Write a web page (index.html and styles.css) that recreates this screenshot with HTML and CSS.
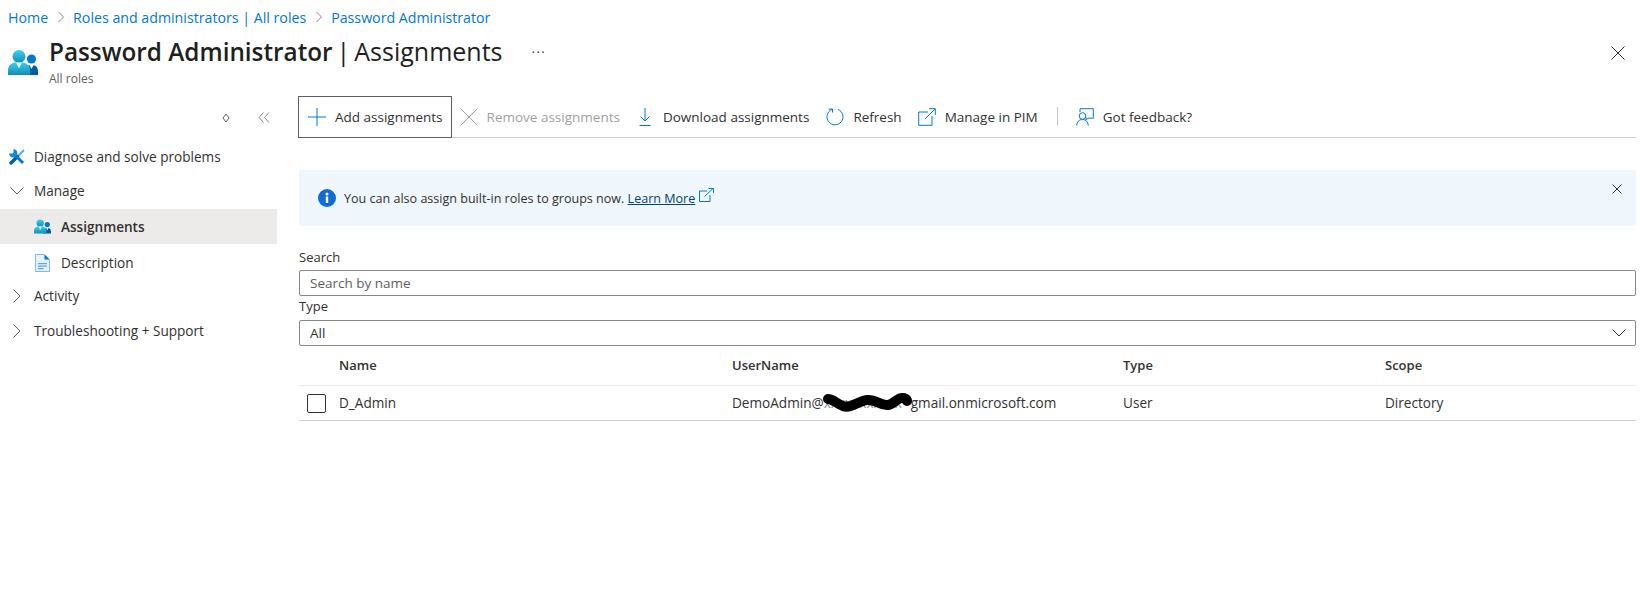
FILE: index.html
```html
<!DOCTYPE html>
<html lang="en">
<head>
    <meta charset="UTF-8">
    <title>Password Administrator | Assignments</title>
    <link rel="stylesheet" href="styles.css">
</head>
<body>
    <svg class="defs" width="0" height="0">
        <defs>
            <linearGradient id="cyan" x1="0" y1="0" x2="0" y2="1">
                <stop offset="0" stop-color="#32d4f5"/>
                <stop offset="1" stop-color="#198ab3"/>
            </linearGradient>
            <symbol id="users" viewBox="0 0 30 25">
                <circle cx="23.500" cy="9" r="4.600" fill="#0078d4"/>
                <path d="M16 25c0-6 1.500-10 7.500-10s6.500 4 6.500 7.500V25z" fill="#005ba1"/>
                <path d="M21.500 15l2 4 2-4z" fill="#fff"/>
                <circle cx="11" cy="6.500" r="6.500" fill="url(#cyan)"/>
                <path d="M0 25v-5c0-5 4-8 11-8s11 3 11 8v5z" fill="url(#cyan)"/>
                <path d="M8 12.500l3 6 3-6z" fill="#fff" opacity=".85"/>
            </symbol>
        </defs>
    </svg>

    <nav class="breadcrumb">
        <a>Home</a>
        <svg class="crumb-sep" viewBox="0 0 8 12"><path d="M1.500 1l5 5-5 5"/></svg>
        <a>Roles and administrators | All roles</a>
        <svg class="crumb-sep" viewBox="0 0 8 12"><path d="M1.500 1l5 5-5 5"/></svg>
        <a>Password Administrator</a>
    </nav>

    <header class="blade-header">
        <svg class="blade-icon"><use href="#users"/></svg>
        <div class="blade-title">
            <h1><strong>Password Administrator</strong> | Assignments</h1>
            <div class="blade-sub">All roles</div>
        </div>
        <span class="more">···</span>
        <svg class="blade-close" viewBox="0 0 14 14"><path d="M.5.500l13 13M13.500.500l-13 13"/></svg>
    </header>

    <div class="blade-body">
        <aside class="sidebar">
            <div class="side-tools">
                <svg class="tool-diamond" viewBox="0 0 8 10"><path d="M4 1L7 5 4 9 1 5z"/></svg>
                <svg class="tool-collapse" viewBox="0 0 12 11"><path d="M5.500.500L1 5.500l4.500 5M11 .500L6.500 5.500l4.500 5"/></svg>
            </div>
            <ul class="nav">
                <li class="nav-row">
                    <svg class="nav-tools" viewBox="0 0 16 16">
                        <path d="M15 1L8 8" stroke="#50a8e0" stroke-width="1.800"/>
                        <path d="M8.500 7.500L2 14" stroke="#005ba1" stroke-width="3.400" stroke-linecap="round"/>
                        <path d="M5 5l9 9" stroke="#0078d4" stroke-width="3"/>
                        <circle cx="4.200" cy="4.200" r="4.200" fill="#0f8ad8"/>
                        <path d="M0 0h4.500v3.600L3.600 4.500H0z" fill="#fff"/>
                    </svg>
                    <span class="nav-label">Diagnose and solve problems</span>
                </li>
                <li class="nav-row nav-up">
                    <svg class="chev-down" viewBox="0 0 14 8"><path d="M.5.500L7 7 13.500.500"/></svg>
                    <span class="nav-label">Manage</span>
                </li>
                <li class="nav-row nav-child selected">
                    <svg class="nav-icon"><use href="#users"/></svg>
                    <span class="nav-label">Assignments</span>
                </li>
                <li class="nav-row nav-child nav-down">
                    <svg class="nav-doc" viewBox="0 0 15 18">
                        <path d="M.5.500h9l5 5v12H.5z" fill="#e6f2fb" stroke="#83b9f9"/>
                        <path d="M9.500.500l5 5h-5z" fill="#0078d4"/>
                        <path d="M3 9h9v1.300H3zM3 11.500h9v1.300H3zM3 14h5.500v1.300H3z" fill="#5ea0ef"/>
                    </svg>
                    <span class="nav-label">Description</span>
                </li>
                <li class="nav-row nav-up">
                    <svg class="chev-right" viewBox="0 0 8 14"><path d="M.5.500L7 7 .5 13.500"/></svg>
                    <span class="nav-label">Activity</span>
                </li>
                <li class="nav-row nav-up">
                    <svg class="chev-right" viewBox="0 0 8 14"><path d="M.5.500L7 7 .5 13.500"/></svg>
                    <span class="nav-label">Troubleshooting + Support</span>
                </li>
            </ul>
        </aside>

        <main class="content">
            <div class="toolbar">
                <button class="tool focused">
                    <svg class="icon-plus" viewBox="0 0 18 18"><path d="M9 0v18M0 9h18"/></svg>
                    Add assignments
                </button>
                <button class="tool disabled">
                    <svg class="icon-x" viewBox="0 0 18 18"><path d="M.5.500l17 17M17.500.500l-17 17"/></svg>
                    Remove assignments
                </button>
                <button class="tool tool-download">
                    <svg class="icon-download" viewBox="0 0 12 18"><path d="M6 0v13M1.500 8.500L6 13l4.500-4.500M.5 17.500h11"/></svg>
                    Download assignments
                </button>
                <button class="tool tool-refresh">
                    <svg class="icon-refresh" viewBox="0 0 18 18"><path d="M6 1.400a8 8 0 1 0 6 0M6.500 1v3.500M2.500 1.200L6.500 1"/></svg>
                    Refresh
                </button>
                <button class="tool tool-pim">
                    <svg class="icon-open" viewBox="0 0 18 18"><path d="M10 4H.7v13.300H14V8M7 11L17 1M11 .7h6.300V7"/></svg>
                    Manage in PIM
                </button>
                <span class="tool-sep"></span>
                <button class="tool">
                    <svg class="icon-feedback" viewBox="0 0 18 18"><path d="M4 4V.7h13.300v9.500h-5.500l-1.800 2v-3"/><circle cx="6.500" cy="8" r="3.300"/><path d="M.7 17.500c0-3.500 2.500-6 5.800-6s5.500 2.500 5.800 6"/></svg>
                    Got feedback?
                </button>
            </div>

            <div class="banner">
                <svg class="banner-info" viewBox="0 0 18 18"><circle cx="9" cy="9" r="9" fill="#0f6cd6"/><rect x="7.800" y="7.500" width="2.400" height="6.500" fill="#fff"/><circle cx="9" cy="5" r="1.500" fill="#fff"/></svg>
                <span class="banner-text">You can also assign built-in roles to groups now. <a>Learn More</a></span>
                <svg class="banner-link" viewBox="0 0 15 14"><path d="M8 3H.5v10.500H11V7M5.500 8.500L14 .5M9.500.500H14.500V5"/></svg>
                <svg class="banner-close" viewBox="0 0 10 10"><path d="M.5.500l9 9M9.500.500l-9 9"/></svg>
            </div>

            <label class="field-label">Search</label>
            <div class="field placeholder">Search by name</div>
            <label class="field-label type-label">Type</label>
            <div class="field">
                All
                <svg class="select-chev" viewBox="0 0 14 8"><path d="M.5.500L7 7 13.500.500"/></svg>
            </div>

            <div class="grid grid-head">
                <span></span>
                <span>Name</span>
                <span>UserName</span>
                <span>Type</span>
                <span>Scope</span>
            </div>
            <div class="grid grid-row">
                <span class="checkbox"></span>
                <span>D_Admin</span>
                <span>DemoAdmin@<span class="redacted">xxxxxxxxxxx<svg class="scribble" viewBox="0 0 90 20"><path d="M6 6c5 0 9 5 15 7 8 3 15-5 24-6 9-1 13 6 21 5 6-1 9-7 14-7 3 0 5 1 5 3"/></svg></span>gmail.onmicrosoft.com</span>
                <span>User</span>
                <span>Directory</span>
            </div>
        </main>
    </div>
</body>
</html>
```

FILE: styles.css
```css
:root {
    --text: #323130;
    --link: #0078d4;
    --icon: #0078d4;
    --ui-font: "Open Sans", "Noto Sans", Arial, sans-serif;
}

* {
    box-sizing: border-box;
}

body {
    margin: 0;
    height: 608px;
    overflow: hidden;
    background: white;
    font-family: var(--ui-font);
    font-size: 13.500px;
    color: var(--text);
}

svg {
    fill: none;
    flex: none;
}

.defs {
    display: block;
    height: 0;
}

/* top of the blade */
.breadcrumb {
    display: flex;
    align-items: center;
    height: 34px;
    padding-left: 8px;
    font-size: 14.200px;
    color: var(--link);
}

.crumb-sep {
    width: 8px;
    height: 12px;
    margin: 0 8px 0 9px;
    stroke: #8a8886;
}

.blade-header {
    display: flex;
    align-items: flex-start;
    height: 62px;
    padding-right: 15px;
}

.blade-icon {
    width: 30px;
    height: 25px;
    margin: 16px 0 0 8px;
}

.blade-title {
    margin-left: 11px;
}

.blade-title h1 {
    margin: -1px 0 0;
    font-size: 25px;
    font-weight: 400;
    line-height: 36px;
    word-spacing: -2.500px;
    color: #201f1e;
}

.blade-title strong {
    font-size: 24.300px;
    font-weight: 600;
    word-spacing: 0;
}

.blade-sub {
    margin-top: 1px;
    font-size: 12px;
    line-height: 16px;
    color: #605e5c;
}

.more {
    margin: 8px 0 0 29px;
    font-size: 13px;
    line-height: 20px;
    letter-spacing: 1.500px;
}

.blade-close {
    width: 14px;
    height: 14px;
    margin: 12px 0 0 auto;
    stroke: #323130;
}

.blade-body {
    display: flex;
}

/* left menu */
.sidebar {
    width: 277px;
    flex: none;
}

.side-tools {
    display: flex;
    align-items: center;
    height: 43px;
    padding: 0 9px 0 222px;
    gap: 28px;
}

.tool-diamond {
    width: 8px;
    height: 10px;
    stroke: #605e5c;
}

.tool-collapse {
    width: 12px;
    height: 11px;
    stroke: #8a8886;
}

.nav {
    list-style: none;
    margin: 0;
    padding: 0;
}

.nav-row {
    display: flex;
    align-items: center;
    height: 35px;
    padding-left: 9px;
    font-size: 13.600px;
}

.nav-row.selected {
    background: #edebe9;
}

.nav-up {
    padding-bottom: 2px;
}

.nav-down {
    padding-top: 2px;
}

.nav-child {
    padding-left: 34px;
}

.nav-label {
    margin-left: 10px;
}

.selected .nav-label {
    font-weight: 600;
}

.nav-tools {
    width: 16px;
    height: 16px;
}

.nav-tools + .nav-label {
    margin-left: 9px;
}

.nav-icon {
    width: 17px;
    height: 15px;
}

.nav-doc {
    width: 15px;
    height: 18px;
    margin: 0 1px;
}

.chev-down {
    width: 14px;
    height: 8px;
    margin-left: 1px;
    stroke: #605e5c;
}

.chev-right {
    width: 8px;
    height: 14px;
    margin: 0 3px 0 4px;
    stroke: #605e5c;
}

/* right side */
.content {
    flex: 1;
    min-width: 0;
    padding: 0 4px 0 21px;
}

.toolbar {
    display: flex;
    align-items: center;
    height: 42px;
    border-bottom: 1px solid #d2d0ce;
}

.tool {
    display: flex;
    align-items: center;
    height: 42px;
    padding: 0 9px;
    background: none;
    border: 0;
    font: inherit;
    color: var(--text);
}

.tool svg {
    margin-right: 9px;
    stroke: var(--icon);
}

.tool.focused {
    padding: 0 8px 0 9px;
    border: 1px solid #605e5c;
}

.tool.disabled {
    padding-left: 8px;
    color: #a19f9d;
}

.tool.disabled svg {
    stroke: #a19f9d;
}

.tool-download {
    padding: 0 8px 0 10px;
}

.tool-download svg {
    margin-right: 12px;
}

.tool-refresh {
    padding-right: 7px;
}

.tool-pim {
    padding-right: 10px;
}

.icon-plus,
.icon-x,
.icon-refresh,
.icon-open,
.icon-feedback {
    width: 18px;
    height: 18px;
}

.icon-download {
    width: 12px;
    height: 18px;
}

.tool-sep {
    width: 1px;
    height: 19px;
    margin: 0 9px;
    background: #c8c6c4;
}

.banner {
    display: flex;
    align-items: center;
    height: 56px;
    margin: 32px 0 0 1px;
    padding: 0 14px 0 19px;
    background: #eff6fc;
    border-radius: 2px;
    font-size: 12.550px;
}

.banner-info {
    width: 18px;
    height: 18px;
    margin-right: 8px;
}

.banner-text a {
    color: #004578;
    text-decoration: underline;
}

.banner-link {
    width: 15px;
    height: 14px;
    margin: -6px 0 0 4px;
    stroke: #0078d4;
}

.banner-close {
    width: 10px;
    height: 10px;
    margin: -19px 0 0 auto;
    stroke: #323130;
}

.field-label {
    display: block;
    margin: 20px 0 2px 1px;
    font-size: 13px;
    line-height: 22px;
}

.type-label {
    margin: 0 0 4px 1px;
    line-height: 20px;
}

.field {
    display: flex;
    align-items: center;
    justify-content: space-between;
    height: 26px;
    margin-left: 1px;
    padding: 0 10px;
    border: 1px solid #8a8886;
    border-radius: 2px;
}

.placeholder {
    color: #605e5c;
}

.select-chev {
    width: 14px;
    height: 8px;
    margin-right: -1px;
    stroke: #323130;
}

.grid {
    display: grid;
    grid-template-columns: 40px 393px 391px 262px 1fr;
    align-items: center;
    margin-left: 1px;
}

.grid-head {
    height: 40px;
    padding-bottom: 2px;
    border-bottom: 1px solid #edebe9;
    font-size: 13px;
    font-weight: 600;
}

.grid-row {
    height: 35px;
    padding-bottom: 2px;
    border-bottom: 1px solid #d2d0ce;
    font-size: 13.600px;
}

.checkbox {
    width: 19px;
    height: 19px;
    margin: 2px 0 0 8px;
    border: 1px solid #323130;
    border-radius: 2px;
}

.redacted {
    position: relative;
    display: inline-block;
    width: 87px;
    color: #8a8886;
    vertical-align: bottom;
    white-space: nowrap;
}

.scribble {
    position: absolute;
    left: -2px;
    top: 0;
    width: 90px;
    height: 20px;
    stroke: #000;
    stroke-width: 10;
    stroke-linecap: round;
}
```
